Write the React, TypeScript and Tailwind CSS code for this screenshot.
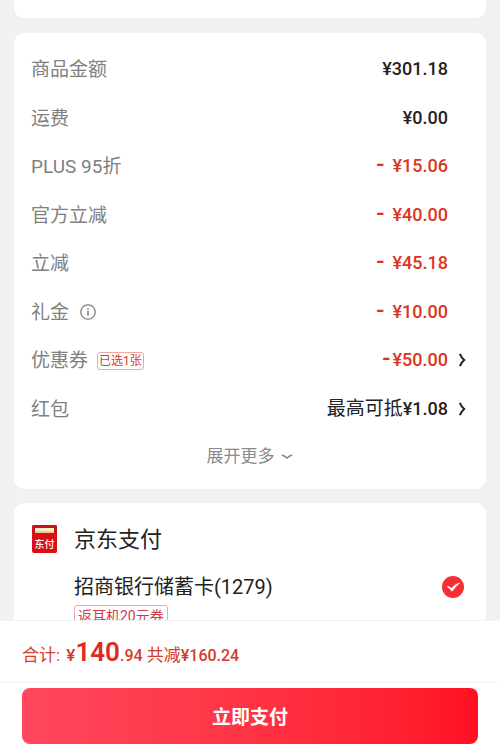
import React from 'react';

type Row = {
  label: string;
  amount: string;
  prefix?: string;
  minus?: 'spaced' | 'tight';
  info?: boolean;
  tag?: string;
  link?: boolean;
};

const rows: Row[] = [
  { label: '商品金额', amount: '¥301.18' },
  { label: '运费', amount: '¥0.00' },
  { label: 'PLUS 95折', amount: '¥15.06', minus: 'spaced' },
  { label: '官方立减', amount: '¥40.00', minus: 'spaced' },
  { label: '立减', amount: '¥45.18', minus: 'spaced' },
  { label: '礼金', amount: '¥10.00', minus: 'spaced', info: true },
  { label: '优惠券', amount: '¥50.00', minus: 'tight', tag: '已选1张', link: true },
  { label: '红包', amount: '¥1.08', prefix: '最高可抵', link: true },
];

const InfoIcon = () => (
  <svg viewBox="0 0 16 16" className="size-4" fill="none" stroke="currentColor" aria-hidden="true">
    <circle cx="8" cy="8" r="7.2" strokeWidth="1.3" />
    <path d="M8 7v4.8" strokeWidth="1.5" />
    <circle cx="8" cy="4.8" r="0.9" fill="currentColor" stroke="none" />
  </svg>
);

const ChevronRight = () => (
  <svg viewBox="0 0 8 14" className="h-3.5 w-2" fill="none" stroke="currentColor" strokeWidth="2" aria-hidden="true">
    <path d="M1.8 0.8Q3.4 4.6 6.2 7Q3.4 9.4 1.8 13.2" />
  </svg>
);

const ChevronDown = () => (
  <svg viewBox="0 0 12 6" className="h-1.5 w-3" fill="none" stroke="currentColor" strokeWidth="1.6" aria-hidden="true">
    <path d="M0.8 1Q4 2 6 4Q8 2 11.2 1" />
  </svg>
);

const WalletLogo = () => (
  <svg viewBox="0 0 25 28" className="h-7 w-[25px]" aria-hidden="true">
    <rect width="25" height="28" rx="2" fill="#d90f17" />
    <path d="M2 0h21a2 2 0 0 1 2 2v6H0V2a2 2 0 0 1 2-2z" fill="#c2161a" />
    <rect x="3" y="3" width="19" height="5" fill="#f6c988" />
    <rect x="3" y="3" width="19" height="3" fill="#fdeccb" />
    <text x="12.5" y="22.5" textAnchor="middle" fill="#fff" fontSize="10" fontWeight="500" fontFamily="'Noto Sans CJK SC', sans-serif">
      东付
    </text>
  </svg>
);

const AmountRow = ({ row }: { row: Row }) => {
  const value = (
    <>
      {row.prefix && <span className="text-[19px] font-normal">{row.prefix}</span>}
      <span className={row.minus ? 'text-[#dc3520]' : ''}>
        {row.minus && (
          <span className={`text-2xl leading-none ${row.minus === 'spaced' ? 'mr-2' : 'mr-0.5'}`}>-</span>
        )}
        {row.amount}
      </span>
    </>
  );

  return (
    <div className="flex items-center justify-between">
      <dt className="flex items-center pt-0.5 text-[19px] text-[#808080]">
        {row.label}
        {row.info && (
          <button type="button" aria-label="礼金说明" className="ml-[11px] pb-0.5">
            <InfoIcon />
          </button>
        )}
        {row.tag && (
          <span className="ml-[9px] rounded-[3px] border border-[#eba99f] px-px text-xs text-[#d23c2c]">
            {row.tag}
          </span>
        )}
      </dt>
      <dd className="text-lg font-medium">
        {row.link ? (
          <button type="button" className="flex items-center">
            <span>{value}</span>
            <span className="ml-2.5">
              <ChevronRight />
            </span>
          </button>
        ) : (
          <span className="mr-[18px]">{value}</span>
        )}
      </dd>
    </div>
  );
};

const App: React.FC = () => {
  return (
    <div className="flex h-screen flex-col bg-[#f1f1f1] font-[Roboto,'Noto_Sans_CJK_SC',sans-serif] text-[#222]">
      <main className="min-h-0 flex-1 overflow-hidden px-3.5">
        <div className="h-[18px] rounded-b-[10px] bg-white" />

        <section className="mt-[15px] rounded-[10px] bg-white pt-3 pr-5 pb-2 pl-[17px]">
          <dl className="grid min-h-[388px] auto-rows-fr">
            {rows.map((row) => (
              <AmountRow key={row.label} row={row} />
            ))}
          </dl>
          <button type="button" className="flex h-12 w-full items-center justify-center gap-1.5 pl-0.5 text-[17px] text-[#8a8a8a]">
            展开更多
            <ChevronDown />
          </button>
        </section>

        <section className="mt-3.5 rounded-t-[10px] bg-white pt-5 pr-[22px] pl-[18px]">
          <div className="flex h-8 items-center gap-[17px]">
            <WalletLogo />
            <h2 className="text-[22px]">京东支付</h2>
          </div>
          <label className="mt-4 flex h-8 items-center justify-between pl-[42px]">
            <span className="text-[20px]">招商银行储蓄卡(1279)</span>
            <span className="relative flex">
              <input
                type="radio"
                name="card"
                defaultChecked
                className="size-[22px] appearance-none rounded-full bg-[#f52f35]"
              />
              <svg viewBox="0 0 22 22" className="pointer-events-none absolute inset-0 size-[22px]" aria-hidden="true">
                <path d="M5 10.4Q7.6 10.6 9.4 12.4Q12.8 8.4 17.4 7Q13.6 10.4 10 15.2Q7.8 12.4 5 10.4z" fill="#fff" stroke="#fff" strokeWidth="0.8" />
              </svg>
            </span>
          </label>
          <div className="pl-[42px]">
            <span className="mt-0.5 inline-block rounded-[3px] border border-[#e9a9b5] px-[3px] text-sm text-[#d03a50]">
              返耳机20元券
            </span>
          </div>
        </section>
      </main>

      <footer className="border-t border-[#f3f3f3] bg-white">
        <p className="flex h-[61px] items-center px-[22px] pt-1 text-[17px] text-[#d63a2b]">
          <span className="leading-10">
            合计: <span className="ml-0.5 font-medium">¥</span>
            <span className="text-[26px] font-semibold text-[#e02a20]">140</span>
            <span className="text-base font-medium">.94</span> 共减
            <span className="text-base font-medium">¥160.24</span>
          </span>
        </p>
        <div className="border-t border-[#f5f5f5] px-[22px] pt-[5px] pb-px">
          <button
            type="button"
            className="h-14 w-full rounded-lg bg-linear-to-r from-[#ff475d] to-[#ff0f23] pt-1 text-[19px] font-bold text-white"
          >
            立即支付
          </button>
        </div>
      </footer>
    </div>
  );
};

export default App;
